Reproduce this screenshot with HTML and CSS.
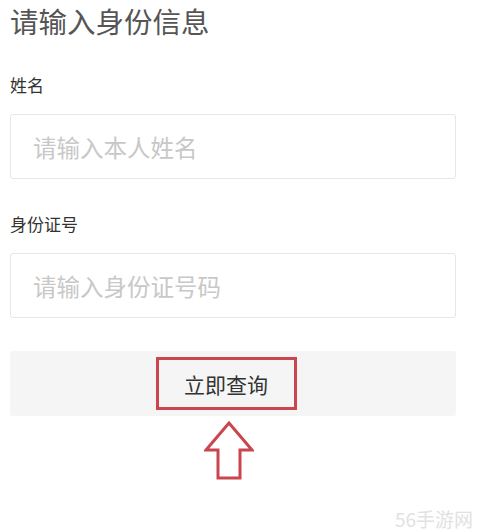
FILE: index.html
```html
<!DOCTYPE html>
<html lang="zh-CN">
<head>
    <meta charset="UTF-8">
    <meta name="viewport" content="width=device-width, initial-scale=1.0">
    <title>请输入身份信息</title>
    <link rel="stylesheet" href="styles.css">
</head>
<body>
    <div class="page">
        <h1>请输入身份信息</h1>

        <div class="form-group">
            <label for="name">姓名</label>
            <input type="text" id="name" placeholder="请输入本人姓名">
        </div>

        <div class="form-group">
            <label for="idcard">身份证号</label>
            <input type="text" id="idcard" placeholder="请输入身份证号码">
        </div>

        <button class="query-btn" type="button">
            <span class="mark">立即查询</span>
        </button>

        <div class="arrow">
            <svg width="50" height="60" viewBox="0 0 50 60" fill="none" stroke="#c9464f" stroke-width="3" stroke-linejoin="miter">
                <path d="M25 2 L2 29 L14 29 L14 57 L36 57 L36 29 L48 29 Z"></path>
            </svg>
        </div>
    </div>

    <div class="watermark">56手游网</div>
</body>
</html>
```

FILE: styles.css
```css
body {
    margin: 0;
    font-family: "Noto Sans CJK SC", "Noto Sans", sans-serif;
    background-color: #fff;
    color: #333;
}
.page {
    width: 446px;
    padding-left: 10px;
}
h1 {
    margin: 0;
    font-size: 28.5px;
    font-weight: normal;
    line-height: normal;
    color: #555;
}
.form-group {
    margin-top: 32px;
}
.form-group + .form-group {
    margin-top: 33px;
}
label {
    display: block;
    font-size: 17px;
    line-height: 24px;
    color: #333;
    margin-bottom: 17px;
}
input {
    display: block;
    width: 100%;
    height: 65px;
    box-sizing: border-box;
    border: 1px solid #e6e6e6;
    border-radius: 3px;
    padding: 0 0 0 22px;
    font-family: inherit;
    font-size: 23.5px;
    color: #333;
    outline: none;
}
input::placeholder {
    color: #c8c8c8;
}
.query-btn {
    display: flex;
    align-items: center;
    justify-content: center;
    width: 100%;
    height: 65px;
    margin-top: 33px;
    padding: 0 14px 0 0;
    border: none;
    border-radius: 3px;
    background-color: #f5f5f5;
    font-family: inherit;
    font-size: 21px;
    color: #333;
}
.mark {
    display: flex;
    align-items: center;
    justify-content: center;
    width: 141px;
    height: 53px;
    box-sizing: border-box;
    border: 3px solid #c9464f;
}
.arrow {
    display: flex;
    justify-content: center;
    padding-right: 8px;
    margin-top: 5px;
}
.watermark {
    position: absolute;
    right: 6px;
    bottom: 0;
    font-size: 19px;
    line-height: normal;
    color: #e2e2e2;
}
```
